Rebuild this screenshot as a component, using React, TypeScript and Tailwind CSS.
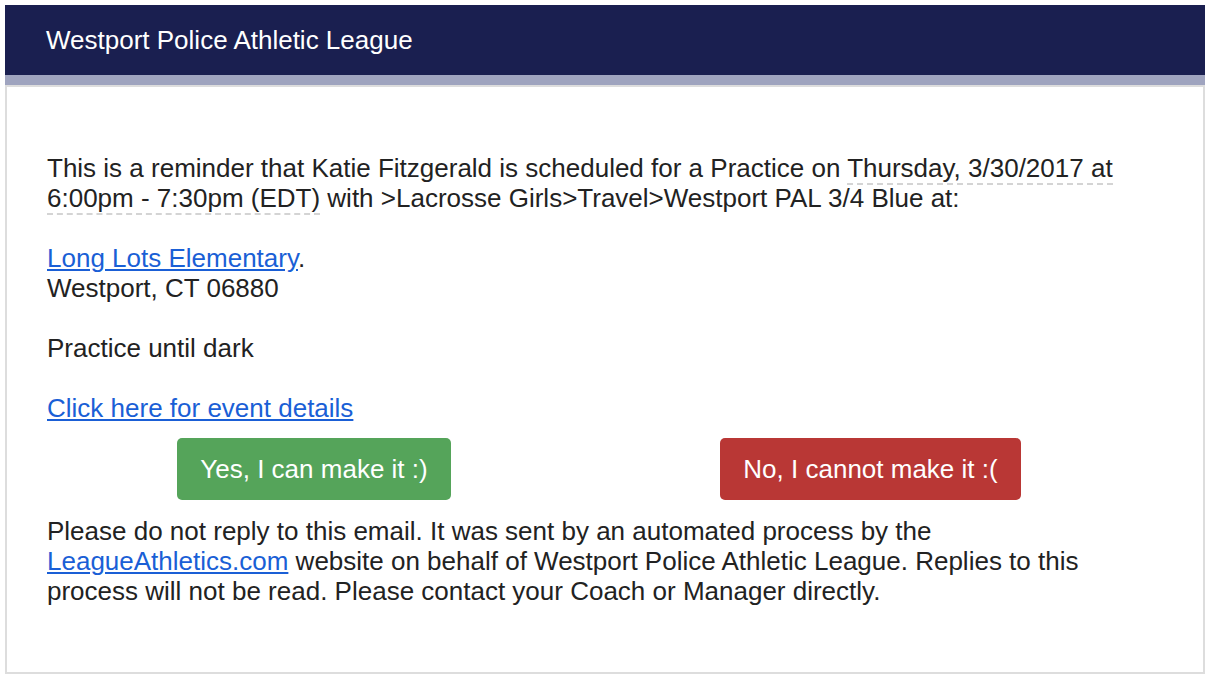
import React from 'react';

const App = () => {
  return (
    <div className="min-h-screen bg-white p-[5px] font-['Liberation_Sans',Arial,sans-serif] text-[26px] leading-[30px] text-[#222]">
      <div className="w-[1200px]">
        <div className="h-[70px] bg-[#1a1f50] px-[41px] flex items-center">
          <h1 className="text-white text-[26px] font-normal">Westport Police Athletic League</h1>
        </div>
        <div className="h-[10px] bg-[#9fa4bf]"></div>
        <div className="border-2 border-[#dddddd] h-[589px] px-[40px] pt-[66px]">
          <p>
            This is a reminder that Katie Fitzgerald is scheduled for a Practice on{' '}
            <span className="border-b-2 border-dashed border-[#d4d4d4]">Thursday, 3/30/2017 at 6:00pm - 7:30pm (EDT)</span>{' '}
            with &gt;Lacrosse Girls&gt;Travel&gt;Westport PAL 3/4 Blue at:
          </p>
          <p className="mt-[30px]">
            <a href="#" className="text-[#1a5fd6] underline">Long Lots Elementary</a>.
            <br />
            Westport, CT 06880
          </p>
          <p className="mt-[30px]">Practice until dark</p>
          <p className="mt-[30px]">
            <a href="#" className="text-[#1a5fd6] underline">Click here for event details</a>
          </p>
          <div className="flex mt-[15px]">
            <a
              href="#"
              className="ml-[130px] w-[274px] h-[62px] rounded-[5px] bg-[#55a45a] text-white flex items-center justify-center"
            >
              Yes, I can make it :)
            </a>
            <a
              href="#"
              className="ml-[269px] w-[301px] h-[62px] rounded-[5px] bg-[#b93735] text-white flex items-center justify-center"
            >
              No, I cannot make it :(
            </a>
          </div>
          <p className="mt-[16px]">
            Please do not reply to this email. It was sent by an automated process by the{' '}
            <a href="#" className="text-[#1a5fd6] underline">LeagueAthletics.com</a> website on behalf of Westport
            Police Athletic League. Replies to this process will not be read. Please contact your Coach or Manager
            directly.
          </p>
        </div>
      </div>
    </div>
  );
};

export default App;
